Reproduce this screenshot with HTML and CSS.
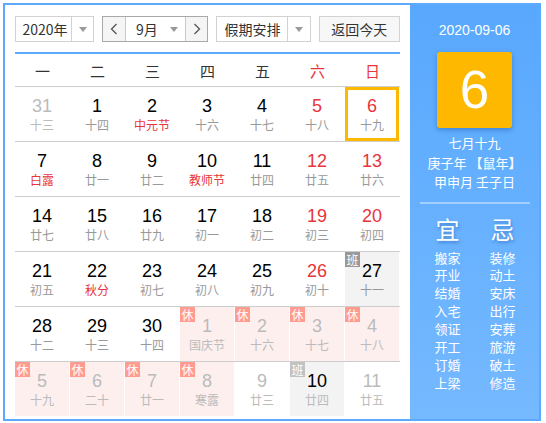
FILE: index.html
```html
<!DOCTYPE html>
<html lang="zh-CN">
<head>
<meta charset="utf-8">
<title>万年历</title>
<link rel="stylesheet" href="styles.css">
</head>
<body>
<div class="calendar">
  <div class="main">
    <div class="toolbar">
      <div class="sel sel-year"><span class="sel-text">2020年</span><span class="sel-arrow"><i class="tri"></i></span></div>
      <div class="sel sel-month">
        <span class="nav-btn nav-prev"><svg width="8" height="12" viewBox="0 0 8 12"><path d="M6.5 1 L1.5 6 L6.5 11" fill="none" stroke="#555" stroke-width="1.3"/></svg></span>
        <span class="month-text">9月</span><span class="month-arrow"><i class="tri"></i></span>
        <span class="nav-btn nav-next"><svg width="8" height="12" viewBox="0 0 8 12"><path d="M1.5 1 L6.5 6 L1.5 11" fill="none" stroke="#555" stroke-width="1.3"/></svg></span>
      </div>
      <div class="sel sel-holiday"><span class="sel-text">假期安排</span><span class="sel-arrow"><i class="tri"></i></span></div>
      <div class="btn-today">返回今天</div>
    </div>
    <div class="week">
      <span>一</span><span>二</span><span>三</span><span>四</span><span>五</span><span class="red">六</span><span class="red">日</span>
    </div>
    <div class="days">
      <div class="cell other"><div class="in"><b>31</b><em>十三</em></div></div>
      <div class="cell"><div class="in"><b>1</b><em>十四</em></div></div>
      <div class="cell"><div class="in"><b>2</b><em class="fest">中元节</em></div></div>
      <div class="cell"><div class="in"><b>3</b><em>十六</em></div></div>
      <div class="cell"><div class="in"><b>4</b><em>十七</em></div></div>
      <div class="cell wkd"><div class="in"><b>5</b><em>十八</em></div></div>
      <div class="cell wkd today"><div class="in"><b>6</b><em>十九</em></div></div>

      <div class="cell"><div class="in"><b>7</b><em class="fest">白露</em></div></div>
      <div class="cell"><div class="in"><b>8</b><em>廿一</em></div></div>
      <div class="cell"><div class="in"><b>9</b><em>廿二</em></div></div>
      <div class="cell"><div class="in"><b>10</b><em class="fest">教师节</em></div></div>
      <div class="cell"><div class="in"><b>11</b><em>廿四</em></div></div>
      <div class="cell wkd"><div class="in"><b>12</b><em>廿五</em></div></div>
      <div class="cell wkd"><div class="in"><b>13</b><em>廿六</em></div></div>

      <div class="cell"><div class="in"><b>14</b><em>廿七</em></div></div>
      <div class="cell"><div class="in"><b>15</b><em>廿八</em></div></div>
      <div class="cell"><div class="in"><b>16</b><em>廿九</em></div></div>
      <div class="cell"><div class="in"><b>17</b><em>初一</em></div></div>
      <div class="cell"><div class="in"><b>18</b><em>初二</em></div></div>
      <div class="cell wkd"><div class="in"><b>19</b><em>初三</em></div></div>
      <div class="cell wkd"><div class="in"><b>20</b><em>初四</em></div></div>

      <div class="cell"><div class="in"><b>21</b><em>初五</em></div></div>
      <div class="cell"><div class="in"><b>22</b><em class="fest">秋分</em></div></div>
      <div class="cell"><div class="in"><b>23</b><em>初七</em></div></div>
      <div class="cell"><div class="in"><b>24</b><em>初八</em></div></div>
      <div class="cell"><div class="in"><b>25</b><em>初九</em></div></div>
      <div class="cell wkd"><div class="in"><b>26</b><em>初十</em></div></div>
      <div class="cell work"><div class="in"><span class="badge">班</span><b>27</b><em>十一</em></div></div>

      <div class="cell"><div class="in"><b>28</b><em>十二</em></div></div>
      <div class="cell"><div class="in"><b>29</b><em>十三</em></div></div>
      <div class="cell"><div class="in"><b>30</b><em>十四</em></div></div>
      <div class="cell other rest"><div class="in"><span class="badge">休</span><b>1</b><em>国庆节</em></div></div>
      <div class="cell other rest"><div class="in"><span class="badge">休</span><b>2</b><em>十六</em></div></div>
      <div class="cell other rest"><div class="in"><span class="badge">休</span><b>3</b><em>十七</em></div></div>
      <div class="cell other rest"><div class="in"><span class="badge">休</span><b>4</b><em>十八</em></div></div>

      <div class="cell other rest"><div class="in"><span class="badge">休</span><b>5</b><em>十九</em></div></div>
      <div class="cell other rest"><div class="in"><span class="badge">休</span><b>6</b><em>二十</em></div></div>
      <div class="cell other rest"><div class="in"><span class="badge">休</span><b>7</b><em>廿一</em></div></div>
      <div class="cell other rest"><div class="in"><span class="badge">休</span><b>8</b><em>寒露</em></div></div>
      <div class="cell other"><div class="in"><b>9</b><em>廿三</em></div></div>
      <div class="cell other work"><div class="in"><span class="badge">班</span><b class="dark">10</b><em>廿四</em></div></div>
      <div class="cell other"><div class="in"><b>11</b><em>廿五</em></div></div>
    </div>
  </div>
  <div class="side">
    <div class="side-date">2020-09-06</div>
    <div class="big-day">6</div>
    <div class="lunar">七月十九</div>
    <div class="lunar">庚子年 【鼠年】</div>
    <div class="lunar">甲申月 壬子日</div>
    <div class="divider"></div>
    <div class="yiji">
      <div class="col">
        <div class="yj-title">宜</div>
        <div>搬家</div><div>开业</div><div>结婚</div><div>入宅</div><div>领证</div><div>开工</div><div>订婚</div><div>上梁</div>
      </div>
      <div class="col">
        <div class="yj-title">忌</div>
        <div>装修</div><div>动土</div><div>安床</div><div>出行</div><div>安葬</div><div>旅游</div><div>破土</div><div>修造</div>
      </div>
    </div>
  </div>
</div>
</body>
</html>
```

FILE: styles.css
```css
* { box-sizing: border-box; }
html, body { margin: 0; padding: 0; background: #fff; }
body {
  font-family: "Noto Sans CJK SC", "Liberation Sans", sans-serif;
  color: #333;
}
.calendar {
  margin: 3px 0 0 3px;
  width: 538px;
  height: 418px;
  border: 2px solid #5ca9fd;
  display: flex;
}
.main {
  width: 405px;
  padding: 11px 10px 0 10px;
}
.toolbar {
  display: flex;
  height: 26px;
  gap: 8px;
}
.sel {
  display: flex;
  height: 26px;
  border: 1px solid #d2d2d2;
  background: #fff;
  font-size: 14px;
  line-height: 24px;
  color: #333;
}
.sel-year { width: 80px; }
.sel-year .sel-text { width: 55px; text-align: center; padding-left: 3px; }
.sel-arrow {
  flex: 1;
  border-left: 1px solid #d2d2d2;
  display: flex;
  align-items: center;
  justify-content: center;
}
.tri {
  display: block;
  width: 0;
  height: 0;
  border-left: 4.5px solid transparent;
  border-right: 4.5px solid transparent;
  border-top: 5px solid #999;
}
.sel-month { width: 107px; border-color: #a9a9a9; }
.nav-btn {
  width: 23px;
  background: #f5f5f5;
  display: flex;
  align-items: center;
  justify-content: center;
}
.nav-prev { border-right: 1px solid #c8c8c8; }
.nav-next { border-left: 1px solid #c8c8c8; width: 22px; }
.month-text { width: 37px; text-align: center; padding-left: 4px; }
.month-arrow { flex: 1; display: flex; align-items: center; justify-content: center; }
.sel-holiday { width: 95px; }
.sel-holiday .sel-text { width: 70px; text-align: center; }
.btn-today {
  width: 82px;
  height: 26px;
  border: 1px solid #d2d2d2;
  background: #f7f7f7;
  font-size: 14px;
  line-height: 24px;
  text-align: center;
  color: #333;
}
.week {
  margin-top: 10px;
  border-top: 2px solid #5ca9fd;
  display: grid;
  grid-template-columns: repeat(7, 55px);
  height: 34px;
  align-items: center;
  font-size: 15px;
  color: #333;
}
.week span { text-align: center; padding-top: 1px; }
.week .red { color: #e8343b; }
.days {
  display: grid;
  grid-template-columns: repeat(7, 55px);
  grid-auto-rows: 55px;
}
.cell {
  border-top: 1px solid #cdcdcd;
  padding-right: 1px;
  background: #fff;
}
.in {
  position: relative;
  height: 54px;
  text-align: center;
  padding-top: 9px;
}
.in b {
  display: block;
  font-family: "Liberation Sans", Arial, sans-serif;
  font-weight: normal;
  font-size: 18px;
  line-height: 20px;
  color: #000;
}
.in em {
  display: block;
  font-style: normal;
  font-size: 12px;
  line-height: 17px;
  color: #999;
}
.in em.fest { color: #e8343b; }
.wkd .in b { color: #e8343b; }
.other .in b { color: #bbb; }
.other .in em { color: #bbb; }
.other .in b.dark { color: #000; }
.today .in { border: 3px solid #ffb800; padding-top: 6px; }
.rest .in { background: #fdefee; }
.work .in { background: #f3f3f3; }
.badge {
  position: absolute;
  left: 0;
  top: 0;
  width: 15px;
  height: 15px;
  font-size: 12px;
  line-height: 15px;
  text-align: center;
  color: #fff;
  background: #999;
}
.rest .badge { background: #ff9c8f; }
.other.work .badge { background: #c2c2c2; }

.side {
  width: 129px;
  background: linear-gradient(#58a8fe, #75b9ff);
  color: #fff;
  text-align: center;
  display: flex;
  flex-direction: column;
  align-items: center;
}
.side-date {
  margin-top: 16px;
  font-family: "Liberation Sans", Arial, sans-serif;
  font-size: 14px;
  line-height: 18px;
}
.big-day {
  margin-top: 13px;
  width: 75px;
  height: 76px;
  background: #ffb800;
  border-radius: 3px;
  box-shadow: 0 2px 5px rgba(0, 60, 140, 0.35);
  font-family: "Liberation Sans", Arial, sans-serif;
  font-size: 53px;
  line-height: 76px;
}
.lunar {
  font-size: 13px;
  line-height: 19.5px;
}
.big-day + .lunar { margin-top: 5px; }
.divider {
  margin-top: 10px;
  width: 110px;
  height: 2px;
  background: rgba(255, 255, 255, 0.4);
}
.yiji {
  display: flex;
  margin-top: 10px;
  margin-left: 1px;
}
.col {
  width: 55px;
  font-size: 13px;
  line-height: 17.9px;
}
.yj-title {
  font-size: 24px;
  line-height: 30px;
  margin-bottom: 5px;
  text-shadow: 1px 2px 3px rgba(0, 50, 120, 0.35);
}
```
